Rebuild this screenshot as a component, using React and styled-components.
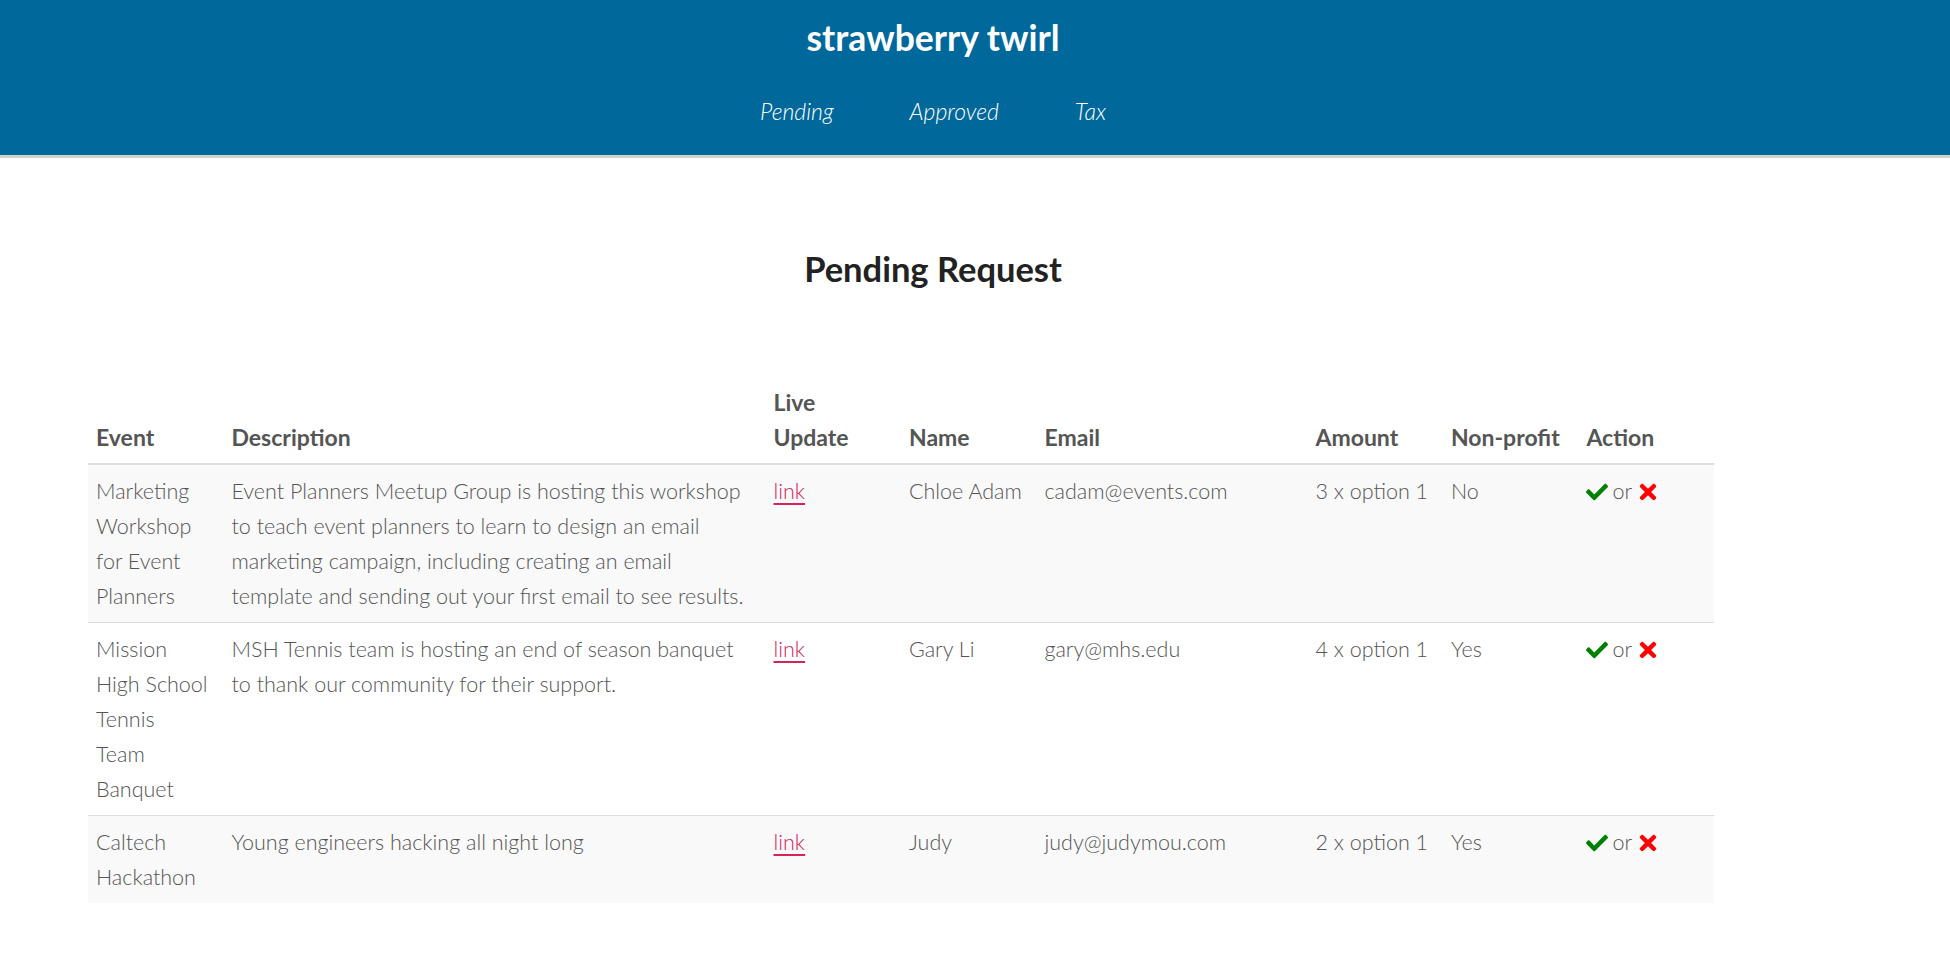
import React from "react";
import styled, { createGlobalStyle } from "styled-components";
import { FaCheck, FaTimes } from "react-icons/fa";

const Global = createGlobalStyle`
  html, body { margin: 0; padding: 0; background: #fff; }
  body { font-family: "Lato", "Open Sans", sans-serif; color: #555; }
  * { box-sizing: border-box; }
`;

const Header = styled.header`
  background: #00689b;
  border-bottom: 3px solid #d0d0d0;
  height: 158px;
`;

const HeaderInner = styled.div`
  width: 1866px;
  display: flex;
  flex-direction: column;
  align-items: center;
  padding-top: 17px;
`;

const Brand = styled.div`
  font-size: 35.5px;
  font-weight: 700;
  color: #fff;
  line-height: 42px;
`;

const Nav = styled.nav`
  display: flex;
  margin-top: 38px;
`;

const NavLink = styled.a`
  font-size: 23px;
  font-style: italic;
  font-weight: 300;
  color: #fff;
  text-decoration: none;
  margin: 0 38px;
  line-height: 28px;
`;

const Main = styled.main`
  width: 1866px;
  padding: 0 0 60px 88px;
`;

const Title = styled.h1`
  width: 1690px;
  margin: 90px 0 87px;
  text-align: center;
  font-size: 34.5px;
  line-height: 42px;
  font-weight: 700;
  color: #222;
`;

const Table = styled.table`
  width: 1626px;
  table-layout: fixed;
  border-collapse: collapse;
  font-size: 21.5px;
`;

const Th = styled.th`
  text-align: left;
  vertical-align: bottom;
  padding: 8px;
  line-height: 35px;
  font-size: 23px;
  font-weight: 700;
  color: #555;
  border-bottom: 2px solid #ddd;
`;

const Row = styled.tr`
  background: ${(p) => (p.$striped ? "#f9f9f9" : "#fff")};
`;

const Td = styled.td`
  vertical-align: top;
  padding: 9px 8px 8px;
  line-height: 35px;
  font-weight: 300;
  color: #555;
  border-top: 1px solid #ddd;
`;

const LiveLink = styled.a`
  color: #d6245a;
  text-decoration: underline;
  text-decoration-thickness: 2px;
  text-underline-offset: 4px;
`;

const Actions = styled.span`
  display: inline-flex;
  align-items: center;
  gap: 4px;
`;

const Approve = styled(FaCheck)`
  color: #008000;
  font-size: 22px;
`;

const Reject = styled(FaTimes)`
  color: #ff0000;
  font-size: 24px;
`;

const widths = [1, 4, 1, 1, 2, 1, 1, 1];

const rows = [
  {
    event: ["Marketing Workshop for Event Planners"],
    desc: "Event Planners Meetup Group is hosting this workshop to teach event planners to learn to design an email marketing campaign, including creating an email template and sending out your first email to see results.",
    name: "Chloe Adam",
    email: "cadam@events.com",
    amount: "3 x option 1",
    np: "No",
  },
  {
    event: ["Mission High School Tennis", "Team Banquet"],
    desc: "MSH Tennis team is hosting an end of season banquet to thank our community for their support.",
    name: "Gary Li",
    email: "gary@mhs.edu",
    amount: "4 x option 1",
    np: "Yes",
  },
  {
    event: ["Caltech Hackathon"],
    desc: "Young engineers hacking all night long",
    name: "Judy",
    email: "judy@judymou.com",
    amount: "2 x option 1",
    np: "Yes",
  },
];

export default function App() {
  return (
    <>
      <Global />
      <Header>
        <HeaderInner>
          <Brand>strawberry twirl</Brand>
          <Nav>
            <NavLink href="#">Pending</NavLink>
            <NavLink href="#">Approved</NavLink>
            <NavLink href="#">Tax</NavLink>
          </Nav>
        </HeaderInner>
      </Header>
      <Main>
        <Title>Pending Request</Title>
        <Table>
          <colgroup>
            {widths.map((w, i) => (
              <col key={i} style={{ width: `${(w / 12) * 100}%` }} />
            ))}
          </colgroup>
          <thead>
            <tr>
              <Th>Event</Th>
              <Th>Description</Th>
              <Th>Live Update</Th>
              <Th>Name</Th>
              <Th>Email</Th>
              <Th>Amount</Th>
              <Th>Non-profit</Th>
              <Th>Action</Th>
            </tr>
          </thead>
          <tbody>
            {rows.map((r, i) => (
              <Row key={i} $striped={i % 2 === 0}>
                <Td>
                  {r.event.map((part, j) => (
                    <React.Fragment key={j}>
                      {j > 0 && <br />}
                      {part}
                    </React.Fragment>
                  ))}
                </Td>
                <Td>{r.desc}</Td>
                <Td>
                  <LiveLink href="#">link</LiveLink>
                </Td>
                <Td>{r.name}</Td>
                <Td>{r.email}</Td>
                <Td>{r.amount}</Td>
                <Td>{r.np}</Td>
                <Td>
                  <Actions>
                    <Approve /> or <Reject />
                  </Actions>
                </Td>
              </Row>
            ))}
          </tbody>
        </Table>
      </Main>
    </>
  );
}
